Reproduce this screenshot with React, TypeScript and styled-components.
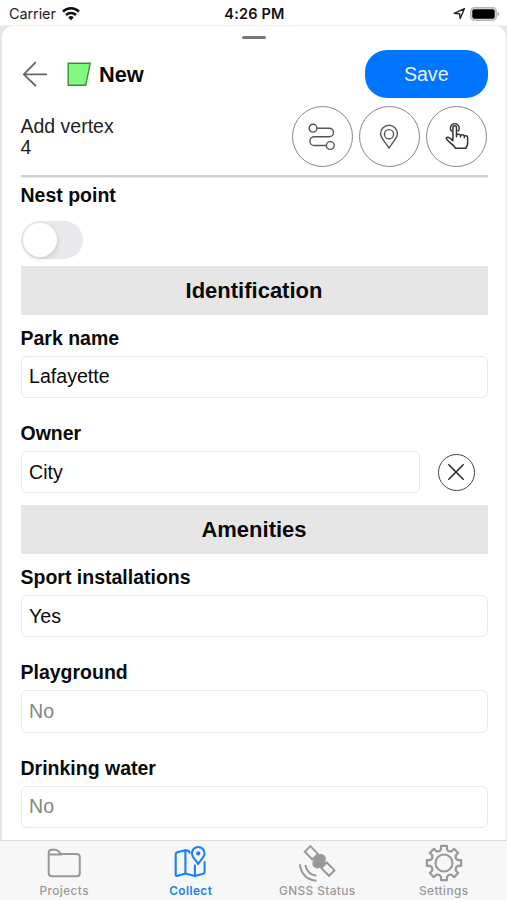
import React from "react";
import styled, { createGlobalStyle } from "styled-components";

const GlobalStyle = createGlobalStyle`
  * { box-sizing: border-box; }
  body { margin: 0; background: #e6e5e3; color: #0a0a0a; font-family: "Liberation Sans", Arial, sans-serif; }
  button, input { font: inherit; color: inherit; }
`;

const Screen = styled.div`
  width: 507px;
  height: 900px;
  display: flex;
  flex-direction: column;
  overflow: hidden;
  background: #e6e5e3;
`;

const StatusBar = styled.header`
  height: 26px;
  flex: none;
  display: grid;
  grid-template-columns: 1fr auto 1fr;
  align-items: center;
  padding: 2px 7px 0 9px;
  background: #fff;
  border-bottom: 1px solid #f1f1f1;
  font-family: Inter, sans-serif;
  font-size: 14.5px;
  color: #222;
`;

const StatusGroup = styled.div<{ $end?: boolean }>`
  display: flex;
  align-items: center;
  gap: ${(p) => (p.$end ? 4 : 6)}px;
  justify-content: ${(p) => (p.$end ? "flex-end" : "flex-start")};
`;

const Carrier = styled.span`
  letter-spacing: -0.1px;
`;

const Clock = styled.span`
  font-weight: 600;
  letter-spacing: 0.2px;
  color: #111;
`;

const Sheet = styled.main`
  height: 814px;
  flex: none;
  margin: 0 1px 0 1.5px;
  padding: 0 18.5px 0 19px;
  background: #fff;
  border-radius: 11px 11px 0 0;
`;

const Handle = styled.div`
  width: 24px;
  height: 3px;
  margin: 0 auto;
  border-radius: 2px;
  background: #777;
  transform: translateY(10px);
`;

const TitleRow = styled.div`
  height: 48px;
  margin-top: 21px;
  display: flex;
  align-items: center;
`;

const BackButton = styled.button`
  width: 28px;
  height: 28px;
  padding: 0;
  border: 0;
  background: none;
  display: flex;
`;

const ShapeSlot = styled.span`
  display: flex;
  margin-left: 18px;
`;

const Title = styled.h1`
  flex: 1;
  margin: 1px 0 0 7.5px;
  font-size: 21.8px;
  font-weight: 700;
`;

const SaveButton = styled.button`
  width: 122.5px;
  height: 48.5px;
  padding: 0;
  border: 0;
  border-radius: 22px;
  background: #0075ff;
  color: #e9f3ff;
  font-size: 19.6px;
`;

const VertexRow = styled.div`
  height: 79px;
  padding-top: 8px;
  display: flex;
  justify-content: space-between;
  border-bottom: 2px solid #d0d0d0;
  box-shadow: 0 1px 0 #ececec;
`;

const VertexText = styled.div`
  padding-top: 9.5px;
  font-size: 19.5px;
  line-height: 21.5px;
  color: #222;
`;

const Tools = styled.div`
  display: flex;
  gap: 6.25px;
  margin-right: 0.3px;
`;

const RoundButton = styled.button<{ $size: number; $color: string }>`
  width: ${(p) => p.$size}px;
  height: ${(p) => p.$size}px;
  padding: 0;
  flex: none;
  border: 1.4px solid ${(p) => p.$color};
  border-radius: 50%;
  background: #fff;
  display: flex;
  align-items: center;
  justify-content: center;
`;

const Label = styled.label`
  display: block;
  height: 41px;
  padding-top: 12px;
  font-size: 19.5px;
  line-height: 22px;
  font-weight: 700;
`;

const SwitchLabel = styled(Label)`
  height: 44px;
  padding-top: 7px;
`;

const Switch = styled.div`
  width: 62px;
  height: 38px;
  margin-bottom: 7px;
  padding: 2px;
  border-radius: 19px;
  background: #e9e9eb;
`;

const Knob = styled.div`
  width: 34px;
  height: 34px;
  border-radius: 50%;
  background: #fff;
  box-shadow: 1px 2px 5px rgba(0, 0, 0, 0.12);
`;

const Section = styled.h2`
  height: 48.7px;
  margin: 0;
  background: #e6e6e6;
  font-size: 22px;
  font-weight: 700;
  line-height: 49px;
  text-align: center;
`;

const FieldRow = styled.div`
  display: flex;
  align-items: center;
  gap: 18px;
  margin-bottom: 12px;
`;

const Input = styled.input`
  min-width: 0;
  flex: 1;
  height: 42.3px;
  padding: 0 8px 0 7.5px;
  border: 1px solid #e8e8e8;
  border-radius: 6px;
  background: #fff;
  font-size: 19.6px;
  outline: 0;
  &::placeholder { color: #858585; opacity: 1; }
`;

const ClearSlot = styled.div`
  width: 50px;
`;

const TabBar = styled.nav`
  flex: 1;
  display: grid;
  grid-template-columns: repeat(4, 1fr);
  padding-left: 1px;
  background: #f7f7f7;
  border-top: 1px solid #dcdcdc;
`;

const Tab = styled.div<{ $active?: boolean }>`
  display: flex;
  flex-direction: column;
  align-items: center;
  padding-top: 3px;
  color: ${(p) => (p.$active ? "#1682f5" : "#999")};
  font-family: Inter, sans-serif;
  font-size: 11.8px;
  font-weight: ${(p) => (p.$active ? 600 : 500)};
  letter-spacing: 0.42px;
  line-height: 14px;
  svg { margin-bottom: 2px; }
`;

const WifiIcon = () => (
  <svg width="18" height="15" viewBox="0 0 18 15" fill="none" stroke="#111" strokeWidth="2.5">
    <path d="M1 5.6a11.4 11.4 0 0 1 16 0" />
    <path d="M4 9a7.1 7.1 0 0 1 10 0" />
    <path d="M9 14.2 6.3 11.4a3.9 3.9 0 0 1 5.4 0Z" fill="#111" stroke="none" />
  </svg>
);

const LocationIcon = () => (
  <svg width="13" height="13" viewBox="0 0 13 13" fill="none" stroke="#222" strokeWidth="1.4" strokeLinejoin="round">
    <path d="M1.2 6.4 11.4 1.6 7.2 11.5 6.6 6.7Z" />
  </svg>
);

const BatteryIcon = () => (
  <svg width="30" height="14" viewBox="0 0 30 14">
    <rect x=".7" y=".7" width="25.6" height="12.6" rx="3.6" fill="#ddd" stroke="#b5b5b5" strokeWidth="1.2" />
    <rect x="2.3" y="2.3" width="22.4" height="9.4" rx="2" fill="#000" />
    <path d="M27.5 4.7c2 .6 2 4 0 4.6Z" fill="#aaa" />
  </svg>
);

const BackIcon = () => (
  <svg width="28" height="28" viewBox="0 0 28 28" fill="none" stroke="#666" strokeWidth="1.8" strokeLinecap="round" strokeLinejoin="round">
    <path d="M25.3 14.3H2.8M14.3 2.7 2.8 14.3 14.3 25.5" />
  </svg>
);

const PolygonIcon = () => (
  <svg width="25" height="25" viewBox="0 0 25 25">
    <path d="M1.2 1.2H23.2L18.7 23.3H1.2Z" fill="#82fa82" stroke="#319331" strokeWidth="1.4" />
  </svg>
);

const RouteIcon = () => (
  <svg width="30" height="30" viewBox="0 0 30 30" fill="none" stroke="#555" strokeWidth="1.4">
    <circle cx="6" cy="6.2" r="3.9" />
    <circle cx="23.3" cy="23.5" r="3.9" />
    <path d="M10 6.2h12.2a4.3 4.3 0 0 1 0 8.6H7.3a4.3 4.3 0 0 0 0 8.7h12" />
  </svg>
);

const PinIcon = () => (
  <svg width="24" height="28" viewBox="0 0 24 28" fill="none" stroke="#555" strokeWidth="1.4" strokeLinejoin="round">
    <path d="M12 25.2C9.4 20.4 3.6 15.6 3.6 10.6a8.4 8.4 0 1 1 16.8 0C20.4 15.6 14.6 20.4 12 25.2Z" />
    <circle cx="12" cy="11.2" r="4.6" />
  </svg>
);

const TapIcon = () => (
  <svg width="26" height="30" viewBox="0 0 26 30" fill="none" stroke="#333" strokeWidth="1.5" strokeLinecap="round" strokeLinejoin="round">
    <path d="M7.4 9A4.4 4.4 0 1 1 14.2 9" />
    <path d="M8.9 18.8V5.6a1.8 1.8 0 0 1 3.6 0v9.2V13.2c.2-1.3 3.9-1.3 4 .2v1.4-1c.1-1.3 3.7-1.3 3.8.3v1.4-1c.1-1.3 3.3-1 3.3.7v6.7c0 1.7-1.3 2.3-1.6 4.3H11.2c-.3-2.6-5.8-4.8-9-9.8.4-1.8 2.8-1.4 4 0l2.7 2.2" />
  </svg>
);

const CloseIcon = () => (
  <svg width="18" height="18" viewBox="0 0 18 18" stroke="#222" strokeWidth="1.5" strokeLinecap="round">
    <path d="m1.8 1.8 14.4 14.4m0-14.4L1.8 16.2" />
  </svg>
);

const FolderIcon = () => (
  <svg width="38" height="38" viewBox="0 0 38 38" fill="none" stroke="currentColor" strokeWidth="2" strokeLinejoin="round">
    <path d="M3.7 29V9c0-2.2 1-3.2 3.2-3.2h4c2.8 0 3.2 4.2 5.8 4.2h15c2.1 0 3.1 1 3.1 3.1V29c0 2.2-1 3.2-3.2 3.2H6.9c-2.2 0-3.2-1-3.2-3.2ZM3.7 10.4h13.5" />
  </svg>
);

const MapIcon = () => (
  <svg width="38" height="38" viewBox="0 0 38 38" fill="none" stroke="currentColor" strokeWidth="2.1" strokeLinejoin="round" strokeLinecap="round">
    <path d="M16.4 6.9 13.2 6.3 5.2 8.2Q3.7 8.7 3.7 10.2V30.8q0 1.5 1.3 1.2l8.4-2.4 9.5 2.4 8.3-2.2q1.4-.4 1.4-1.7V18M13.4 6.3V29.2M22.9 21.4V31.6M17.4 7.6v1.2" />
    <path d="M26.2 20.1c-1.7-3.6-6.3-6.6-6.3-10.8a6.3 6.3 0 0 1 12.6 0c0 4.2-4.6 7.2-6.3 10.8Z" />
    <circle cx="26.2" cy="9.4" r="2.1" fill="currentColor" stroke="none" />
  </svg>
);

const SatelliteIcon = () => (
  <svg width="38" height="38" viewBox="0 0 38 38" fill="none" stroke="currentColor" strokeWidth="2">
    <path d="M12.4 2.1 20 9.9 14.4 15.5 6.8 7.7Z" />
    <path d="M28.8 18.5 36.5 26.4 30.9 31.8 23.3 24Z" />
    <circle cx="23" cy="14.9" r="4.9" fill="currentColor" stroke="none" />
    <circle cx="19.3" cy="19.5" r="4.9" fill="currentColor" stroke="none" />
    <path d="m15.5 14.5 5-4 7.3 8.7-4.8 5Z" fill="currentColor" stroke="none" />
    <path d="M7.4 20.8c.5 5.8 5 10.4 11 10.8M2 20.3c.3 9 7.4 16 16.4 16.4" />
  </svg>
);

const gearPath = (() => {
  const point = (radius: number, angle: number) =>
    `${(19 + radius * Math.cos(angle)).toFixed(2)} ${(19 + radius * Math.sin(angle)).toFixed(2)}`;
  let path = "";
  for (let i = 0; i < 8; i++) {
    const center = (i * Math.PI) / 4 - Math.PI / 2;
    path += `${i ? "L" : "M"}${point(14.1, center - 0.21)}L${point(17.4, center - 0.17)}`;
    path += `L${point(17.4, center + 0.17)}L${point(14.1, center + 0.21)}`;
    path += `Q${point(11.6, center + Math.PI / 8)} ${point(14.1, center + Math.PI / 4 - 0.21)}`;
  }
  return `${path}Z`;
})();

const GearIcon = () => (
  <svg width="38" height="38" viewBox="0 0 38 38" fill="none" stroke="currentColor" strokeWidth="2.2" strokeLinejoin="round">
    <path d={gearPath} />
    <circle cx="19" cy="19" r="8.5" />
  </svg>
);

export default function App() {
  return (
    <Screen>
      <GlobalStyle />
      <StatusBar>
        <StatusGroup>
          <Carrier>Carrier</Carrier>
          <WifiIcon />
        </StatusGroup>
        <Clock>4:26 PM</Clock>
        <StatusGroup $end>
          <LocationIcon />
          <BatteryIcon />
        </StatusGroup>
      </StatusBar>
      <Sheet>
        <Handle />
        <TitleRow>
          <BackButton aria-label="Back"><BackIcon /></BackButton>
          <ShapeSlot><PolygonIcon /></ShapeSlot>
          <Title>New</Title>
          <SaveButton>Save</SaveButton>
        </TitleRow>
        <VertexRow>
          <VertexText>Add vertex<br />4</VertexText>
          <Tools>
            <RoundButton $size={61} $color="#888" aria-label="Route"><RouteIcon /></RoundButton>
            <RoundButton $size={61} $color="#888" aria-label="Place"><PinIcon /></RoundButton>
            <RoundButton $size={61} $color="#888" aria-label="Tap"><TapIcon /></RoundButton>
          </Tools>
        </VertexRow>
        <SwitchLabel as="div">Nest point</SwitchLabel>
        <Switch role="switch" aria-checked="false"><Knob /></Switch>
        <Section>Identification</Section>
        <Label htmlFor="park">Park name</Label>
        <FieldRow><Input id="park" defaultValue="Lafayette" /></FieldRow>
        <Label htmlFor="owner">Owner</Label>
        <FieldRow>
          <Input id="owner" defaultValue="City" />
          <ClearSlot>
            <RoundButton $size={37} $color="#444" aria-label="Clear"><CloseIcon /></RoundButton>
          </ClearSlot>
        </FieldRow>
        <Section>Amenities</Section>
        <Label htmlFor="sport">Sport installations</Label>
        <FieldRow><Input id="sport" defaultValue="Yes" /></FieldRow>
        <Label htmlFor="playground">Playground</Label>
        <FieldRow><Input id="playground" placeholder="No" /></FieldRow>
        <Label htmlFor="water">Drinking water</Label>
        <FieldRow><Input id="water" placeholder="No" /></FieldRow>
      </Sheet>
      <TabBar>
        <Tab><FolderIcon />Projects</Tab>
        <Tab $active><MapIcon />Collect</Tab>
        <Tab><SatelliteIcon />GNSS Status</Tab>
        <Tab><GearIcon />Settings</Tab>
      </TabBar>
    </Screen>
  );
}
